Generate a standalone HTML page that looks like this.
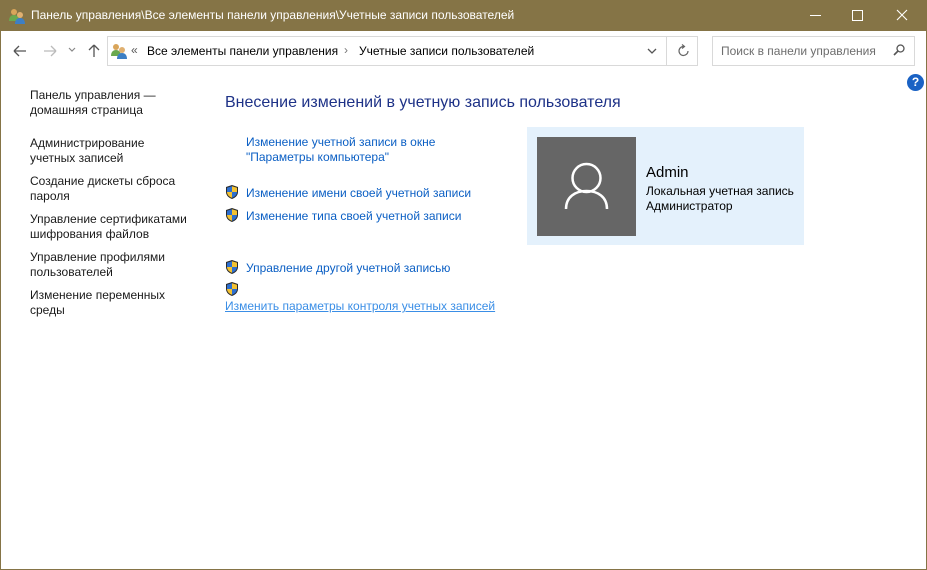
<!DOCTYPE html>
<html><head><meta charset="utf-8"><style>
*{margin:0;padding:0;box-sizing:border-box}
body{width:927px;height:570px;overflow:hidden;background:#fff;font-family:"Liberation Sans","DejaVu Sans",sans-serif;font-size:12px;color:#000;position:relative}
.abs{position:absolute;white-space:nowrap}
#title{position:absolute;left:0;top:0;width:927px;height:31px;background:#857446;color:#fff}
#frame{position:absolute;left:0;top:31px;width:927px;height:539px;border-left:1px solid #857446;border-right:1px solid #857446;border-bottom:1px solid #857446}
.left{color:#1a1a1a;line-height:15px}
.lnk{color:#0b5fc4;line-height:15px}
.sh{position:absolute;width:16px;height:16px}
</style></head><body>
<div id="title">
 <svg class="abs" style="left:8px;top:7px" width="18" height="18" viewBox="0 0 18 18"><circle cx="6" cy="5" r="3" fill="#d9a55a"/><path d="M1 14c0-4 2-6 5-6s5 2 5 6z" fill="#6aa84f"/><circle cx="12" cy="8" r="3" fill="#e0b070"/><path d="M7 17c0-4 2-6 5-6s5 2 5 6z" fill="#3d7fc4"/></svg>
 <div class="abs" style="left:31px;top:8px;font-size:12px">Панель управления\Все элементы панели управления\Учетные записи пользователей</div>
 <div class="abs" style="left:810px;top:15px;width:11px;height:1px;background:#fff"></div>
 <div class="abs" style="left:852px;top:10px;width:11px;height:11px;border:1px solid #fff"></div>
 <svg class="abs" style="left:896px;top:9px" width="12" height="12"><path d="M1 1L11 11M11 1L1 11" stroke="#fff" stroke-width="1.1"/></svg>
</div>
<div id="frame"></div>
<svg class="abs" style="left:12px;top:43px" width="16" height="16"><path d="M2 8H14M2 8L7 3M2 8L7 13" stroke="#555" stroke-width="1.3" fill="none"/></svg>
<svg class="abs" style="left:42px;top:43px" width="16" height="16"><path d="M2 8H14M14 8L9 3M14 8L9 13" stroke="#bbb" stroke-width="1.3" fill="none"/></svg>
<svg class="abs" style="left:68px;top:46px" width="8" height="8"><path d="M1 2L4 5L7 2" stroke="#888" stroke-width="1.2" fill="none"/></svg>
<svg class="abs" style="left:86px;top:43px" width="16" height="16"><path d="M8 14V2M8 2L3 7M8 2L13 7" stroke="#555" stroke-width="1.3" fill="none"/></svg>
<div class="abs" style="left:107px;top:36px;width:591px;height:30px;border:1px solid #d9d9d9"></div>
<div class="abs" style="left:666px;top:37px;width:1px;height:28px;background:#d9d9d9"></div>
<svg class="abs" style="left:110px;top:42px" width="18" height="18" viewBox="0 0 18 18"><circle cx="6" cy="5" r="3" fill="#d9a55a"/><path d="M1 14c0-4 2-6 5-6s5 2 5 6z" fill="#6aa84f"/><circle cx="12" cy="8" r="3" fill="#e0b070"/><path d="M7 17c0-4 2-6 5-6s5 2 5 6z" fill="#3d7fc4"/></svg>
<div class="abs" style="left:131px;top:43px;color:#555">«</div>
<div class="abs" style="left:147px;top:44px">Все элементы панели управления</div>
<div class="abs" style="left:344px;top:43px;color:#777">›</div>
<div class="abs" style="left:359px;top:44px">Учетные записи пользователей</div>
<svg class="abs" style="left:647px;top:47px" width="10" height="8"><path d="M1 2L5 6L9 2" stroke="#555" stroke-width="1.3" fill="none"/></svg>
<svg class="abs" style="left:676px;top:43px" width="16" height="16"><path d="M12 8A4.5 4.5 0 1 1 8 3.5" stroke="#666" stroke-width="1.2" fill="none"/><path d="M6 1.5L8.5 3.5L6 5.5" stroke="#666" stroke-width="1.2" fill="none"/></svg>
<div class="abs" style="left:712px;top:36px;width:203px;height:30px;border:1px solid #d9d9d9"></div>
<div class="abs" style="left:721px;top:44px;color:#6d6d6d">Поиск в панели управления</div>
<svg class="abs" style="left:892px;top:43px" width="14" height="14"><circle cx="8.5" cy="5.5" r="3.5" stroke="#555" stroke-width="1.3" fill="none"/><path d="M6 8L2 12" stroke="#555" stroke-width="1.6"/></svg>
<div class="abs" style="left:907px;top:74px;width:17px;height:17px;border-radius:50%;background:#1a62c4;color:#fff;font-weight:bold;font-size:12px;text-align:center;line-height:17px">?</div>

<div class="abs left" style="left:30px;top:88px">Панель управления —<br>домашняя страница</div>
<div class="abs left" style="left:30px;top:136px">Администрирование<br>учетных записей</div>
<div class="abs left" style="left:30px;top:174px">Создание дискеты сброса<br>пароля</div>
<div class="abs left" style="left:30px;top:212px">Управление сертификатами<br>шифрования файлов</div>
<div class="abs left" style="left:30px;top:250px">Управление профилями<br>пользователей</div>
<div class="abs left" style="left:30px;top:288px">Изменение переменных<br>среды</div>

<div class="abs" style="left:225px;top:94px;font-size:16px;color:#1e3287">Внесение изменений в учетную запись пользователя</div>
<div class="abs lnk" style="left:246px;top:135px">Изменение учетной записи в окне<br>"Параметры компьютера"</div>
<svg width="0" height="0" style="position:absolute"><defs><g id="s"><path d="M8 1L2 3V8C2 11.5 5 14 8 15C11 14 14 11.5 14 8V3Z" fill="#2b2b2b"/><path d="M8 2.2L3 3.8V8H8Z" fill="#2d6fd0"/><path d="M8 2.2L13 3.8V8H8Z" fill="#f3c232"/><path d="M3 8H8V13.8C5.5 13 3 11 3 8Z" fill="#f3c232"/><path d="M13 8H8V13.8C10.5 13 13 11 13 8Z" fill="#2d6fd0"/></g></defs></svg>
<svg class="sh" style="left:224px;top:184px"><use href="#s"/></svg>
<div class="abs lnk" style="left:246px;top:186px">Изменение имени своей учетной записи</div>
<svg class="sh" style="left:224px;top:207px"><use href="#s"/></svg>
<div class="abs lnk" style="left:246px;top:209px">Изменение типа своей учетной записи</div>
<svg class="sh" style="left:224px;top:259px"><use href="#s"/></svg>
<div class="abs lnk" style="left:246px;top:261px">Управление другой учетной записью</div>
<svg class="sh" style="left:224px;top:281px"><use href="#s"/></svg>
<div class="abs lnk" style="left:225px;top:299px;text-decoration:underline;color:#3a8ee6">Изменить параметры контроля учетных записей</div>

<div class="abs" style="left:527px;top:127px;width:277px;height:118px;background:#e4f1fc"></div>
<div class="abs" style="left:537px;top:137px;width:99px;height:99px;background:#666"></div>
<svg class="abs" style="left:537px;top:137px" width="99" height="99"><circle cx="49.5" cy="41" r="14" stroke="#fff" stroke-width="2.5" fill="none"/><path d="M29 72C29 60 38 54 49.5 54S70 60 70 72" stroke="#fff" stroke-width="2.5" fill="none"/></svg>
<div class="abs" style="left:646px;top:164px;font-size:15px">Admin</div>
<div class="abs" style="left:646px;top:184px;line-height:15px">Локальная учетная запись<br>Администратор</div>
</body></html>
